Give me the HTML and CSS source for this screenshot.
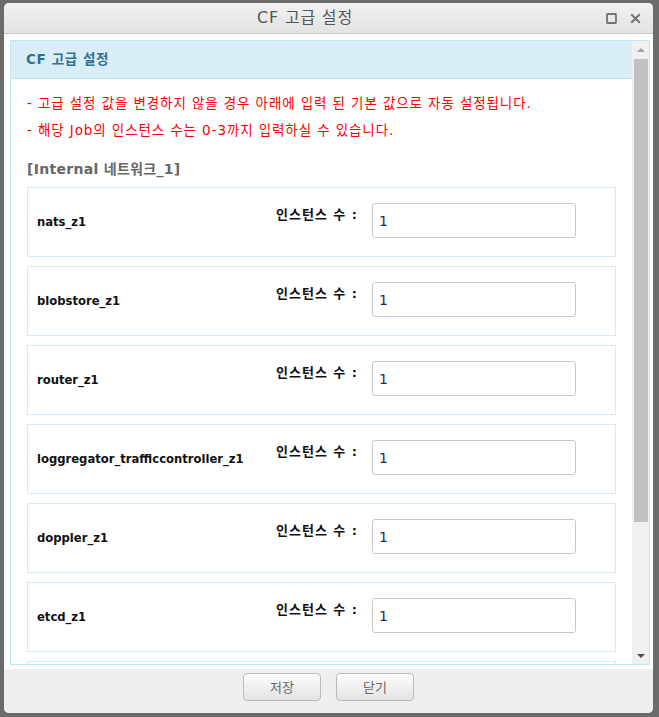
FILE: index.html
```html
<!DOCTYPE html>
<html lang="ko">
<head>
<meta charset="utf-8">
<title>CF 고급 설정</title>
<link rel="stylesheet" href="styles.css">
</head>
<body>
<div class="dialog">
  <div class="titlebar">
    <span class="title">CF 고급 설정</span>
    <div class="win-ctrls">
      <svg class="ctrl" width="11" height="11" viewBox="0 0 11 11"><rect x="1" y="1" width="9" height="9" rx="0.5" fill="none" stroke="#747474" stroke-width="1.8"/></svg>
      <svg class="ctrl" width="11" height="11" viewBox="0 0 11 11"><path d="M1.2 1.2 L9.8 9.8 M9.8 1.2 L1.2 9.8" stroke="#747474" stroke-width="2" fill="none"/></svg>
    </div>
  </div>
  <div class="dialog-body">
    <div class="panel">
      <div class="panel-scroll">
        <div class="panel-heading">CF 고급 설정</div>
        <div class="panel-body">
          <p class="notice">- 고급 설정 값을 변경하지 않을 경우 아래에 입력 된 기본 값으로 자동 설정됩니다.</p>
          <p class="notice">- 해당 Job의 인스턴스 수는 0-3까지 입력하실 수 있습니다.</p>
          <h4 class="section-title">[Internal 네트워크_1]</h4>
          <div class="job-list">
            <div class="job-card"><span class="job-name">nats_z1</span><span class="job-label">인스턴스 수 :</span><input class="job-input" type="text" value="1"></div>
            <div class="job-card"><span class="job-name">blobstore_z1</span><span class="job-label">인스턴스 수 :</span><input class="job-input" type="text" value="1"></div>
            <div class="job-card"><span class="job-name">router_z1</span><span class="job-label">인스턴스 수 :</span><input class="job-input" type="text" value="1"></div>
            <div class="job-card"><span class="job-name">loggregator_trafficcontroller_z1</span><span class="job-label">인스턴스 수 :</span><input class="job-input" type="text" value="1"></div>
            <div class="job-card"><span class="job-name">doppler_z1</span><span class="job-label">인스턴스 수 :</span><input class="job-input" type="text" value="1"></div>
            <div class="job-card"><span class="job-name">etcd_z1</span><span class="job-label">인스턴스 수 :</span><input class="job-input" type="text" value="1"></div>
            <div class="job-card"></div>
          </div>
        </div>
      </div>
      <div class="scrollbar">
        <div class="sb-btn"><span class="arrow-up"></span></div>
        <div class="sb-thumb"></div>
        <div class="sb-track"></div>
        <div class="sb-btn"><span class="arrow-down"></span></div>
      </div>
    </div>
  </div>
  <div class="dialog-footer">
    <button class="btn" type="button">저장</button>
    <button class="btn" type="button">닫기</button>
  </div>
</div>
</body>
</html>
```
FILE: styles.css
```css
* { box-sizing: border-box; }

html, body {
  margin: 0;
  padding: 0;
  height: 717px;
  overflow: hidden;
}

body {
  background: #6b6b6b;
  font-family: "DejaVu Sans", "Noto Sans CJK KR", sans-serif;
  font-size: 13px;
  color: #222;
  padding: 3px 0 0 4px;
}

.dialog {
  width: 649px;
  height: 710px;
  background: #fff;
  border-radius: 5px;
  display: flex;
  flex-direction: column;
  overflow: hidden;
}

.titlebar {
  height: 31px;
  flex: 0 0 31px;
  background: linear-gradient(#f1f1f1, #e2e2e2);
  border-bottom: 1px solid #c6c6c6;
  display: flex;
  align-items: flex-start;
}

.title {
  flex: 1;
  text-align: center;
  font-size: 16px;
  letter-spacing: 0.8px;
  color: #555;
  line-height: 30px;
}

.win-ctrls {
  display: flex;
  gap: 13px;
  padding: 10px 12px 0 0;
}

.ctrl { display: block; }

.dialog-body {
  padding: 6px 3px 4px 6px;
}

.panel {
  height: 625px;
  border: 1px solid #bce8f1;
  display: flex;
}

.panel-scroll {
  flex: 1;
  overflow: hidden;
}

.panel-heading {
  height: 38px;
  background: #d9edf7;
  border-bottom: 1px solid #bce8f1;
  color: #31708f;
  font-weight: bold;
  font-size: 13.5px;
  letter-spacing: 0.6px;
  line-height: 37px;
  padding-left: 15px;
}

.panel-body {
  padding: 11px 16px 0 16px;
}

.notice {
  margin: 0;
  color: #f00;
  font-size: 13.5px;
  letter-spacing: 0.9px;
  line-height: 27px;
  white-space: nowrap;
}

.section-title {
  margin: 15px 0 8px 0;
  font-size: 14px;
  letter-spacing: 0.3px;
  line-height: 20px;
  color: #666;
  font-weight: bold;
}

.job-list {
  display: flex;
  flex-direction: column;
  gap: 9px;
}

.job-card {
  height: 70px;
  flex: 0 0 70px;
  border: 1px solid #d4eaf6;
  padding: 15px 0 18px 9px;
  display: grid;
  grid-template-columns: 239px 96px 204px;
  align-items: center;
}

.job-name {
  font-weight: bold;
  font-size: 11.6px;
  color: #111;
  padding-top: 2px;
}

.job-label {
  align-self: start;
  margin-top: 2px;
  line-height: 20px;
  font-weight: bold;
  font-size: 13px;
  letter-spacing: 1px;
  color: #111;
  white-space: nowrap;
}

.job-input {
  width: 204px;
  height: 35px;
  border: 1px solid #c8c8c8;
  border-radius: 3px;
  padding: 0 6px;
  font-family: "DejaVu Sans", "Noto Sans CJK KR", sans-serif;
  font-size: 14px;
  color: #1b2d55;
  background: #fff;
}

.scrollbar {
  width: 17px;
  flex: 0 0 17px;
  background: #f0f0f0;
  display: flex;
  flex-direction: column;
}

.sb-btn {
  height: 17px;
  flex: 0 0 17px;
  display: flex;
  align-items: center;
  justify-content: center;
}

.arrow-up {
  width: 0;
  height: 0;
  border-left: 4px solid transparent;
  border-right: 4px solid transparent;
  border-bottom: 4px solid #a3a3a3;
}

.arrow-down {
  width: 0;
  height: 0;
  border-left: 4px solid transparent;
  border-right: 4px solid transparent;
  border-top: 4px solid #505050;
}

.sb-thumb {
  height: 463px;
  flex: 0 0 463px;
  margin: 1px 1px 0 2px;
  background: #c1c1c1;
}

.sb-track { flex: 1; }

.dialog-footer {
  flex: 1;
  background: #efefef;
  display: flex;
  justify-content: center;
  align-items: flex-start;
  gap: 15px;
  padding-top: 4px;
}

.btn {
  width: 78px;
  height: 28px;
  border: 1px solid #bababa;
  border-radius: 4px;
  background: linear-gradient(#fcfcfc, #e4e4e4);
  font-family: "Noto Sans CJK KR", "DejaVu Sans", sans-serif;
  font-size: 13px;
  line-height: 26px;
  color: #666;
  padding: 0;
}
```
